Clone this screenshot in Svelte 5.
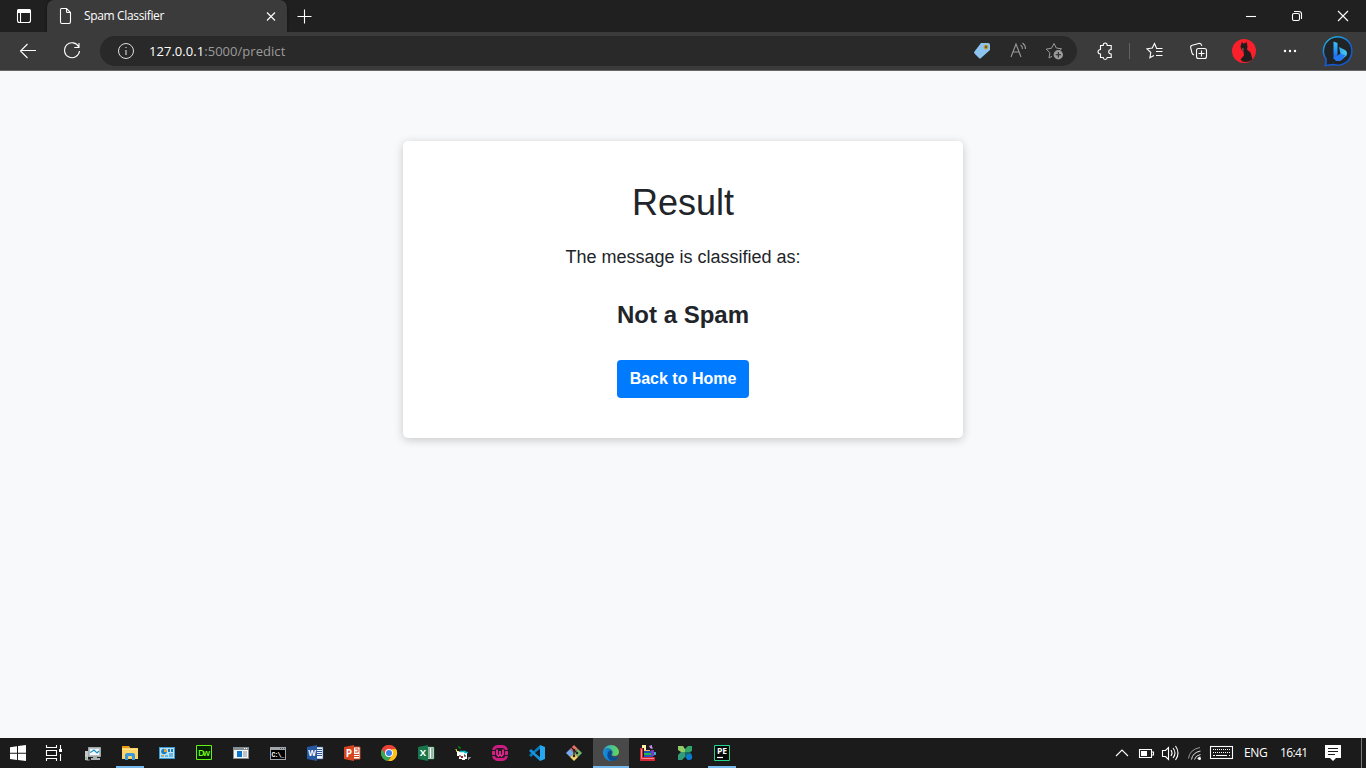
<script>
  // Taskbar shortcuts; every glyph is drawn in an 18 by 18 box.
  const apps = [
    { art: `<path d="M4.5 3.5h12v9h-12z" fill="#b8c0c5" stroke="#a2a9ad"/><path d="M6 5h9v6H6z" fill="#f5fbfd"/><path d="M6 8.5l2-1 2-1.500 3 3 2-2" fill="none" stroke="#1b91cf" stroke-width="1.2"/><path d="M9 13h4v1h3v2H7v-2h2z" fill="#a9b0b3"/><path d="M1 7h3v9H1z" fill="#c4c7c8"/><path d="M1 14h2" stroke="#5dad58"/><path d="M2 16h4" stroke="#969da0"/>` },
    { open: true, art: `<path d="M1 2h7l1 2h8v11H1z" fill="#ffd568"/><path d="M1 2h7v2H1z" fill="#e79a14"/><path d="M1 5h16v1H1z" fill="#ffe18c"/><path d="M4 16v-5q0-2 2-2h6q2 0 2 2v5h-3v-3q0-1-1-1H8q-1 0-1 1v3z" fill="#3a99db"/>` },
    { art: `<path d="M1 3h16v12H1z" fill="#3b9bd3"/><path d="M2 4h14v10H2z" fill="#b9e3f6"/><circle cx="6" cy="7.500" r="2.8" fill="#1680c1"/><path d="M6 5v3h3A3 3 0 006 5z" fill="#ef9d2b"/><path d="M10 5h2v3h-2zm3 0h2v3h-2z" fill="#177dbb"/><path d="M3 12h3M7 12h3M11 10h4M11 12h4" stroke="#178bce"/><path d="M4 11.500h2" stroke="#ef9d2b"/>` },
    { art: `<path d="M1.500 1.500h15v14h-15z" fill="#062207" stroke="#63f216"/><text x="9" y="12.200" text-anchor="middle" font-size="9" font-weight="600" textLength="12" fill="#76ff18">Dw</text>` },
    { art: `<path d="M1 3h16v12H1z" fill="#848e95"/><path d="M2 6h14v8H2z" fill="#f5f5f5"/><path d="M5 7h5v6H5z" fill="#0876ce"/><path d="M11 8h4M11 10h4M11 12h4" stroke="#8a9295"/><path d="M12 4.500h1M14 4.500h1" stroke="#fff"/>` },
    { art: `<path d="M1 3h16v13H1z" fill="#a0a8ac"/><path d="M2 6h14v9H2z" fill="#000"/><path d="M11 4.500h1M13 4.500h1M15 4.500h1" stroke="#4b5357"/><text x="2.500" y="12.500" class="mono" font-size="6.500" font-weight="700" textLength="13" fill="#fff">C:\\_</text>` },
    { art: `<path d="M9 3h8v12H9z" fill="#f2f6ff" stroke="#2b579a" stroke-width=".6"/><path d="M11 5.500h5M11 7.500h5M11 9.500h5M11 11.500h5" stroke="#2b579a"/><path d="M1 3l10-2v16L1 15z" fill="#2858a0"/><text x="6" y="12" text-anchor="middle" font-size="8" font-weight="700" fill="#fff">W</text>` },
    { art: `<path d="M9 3h8v12H9z" fill="#fff" stroke="#d34826"/><path d="M12 5h3v3h-3M11 10.500h5M11 12.500h5" stroke="#d34826" fill="none"/><path d="M1 3l10-2v16L1 15z" fill="#d44420"/><text x="6" y="12.500" text-anchor="middle" font-size="10" font-weight="700" fill="#fff">P</text>` },
    { art: `<circle cx="9" cy="9" r="8" fill="#e94335"/><path d="M2.100 5A8 8 0 008 17l4-6.500L9 9 5.600 11z" fill="#34a853"/><path d="M16 5A8 8 0 018.200 17L12.500 11 12 5z" fill="#fbc116"/><path d="M9 5h7A8 8 0 002.100 5l3.500 5z" fill="#e94335"/><circle cx="9" cy="9" r="4" fill="#fff"/><circle cx="9" cy="9" r="3" fill="#397ee9"/>` },
    { art: `<path d="M9 3h8v12H9z" fill="#f8fff9" stroke="#217346" stroke-width=".7"/><path d="M11 5h2M14 5h2M11 7h2M14 7h2M11 9h2M14 9h2M11 11h2M14 11h2M11 13h2M14 13h2" stroke="#217346"/><path d="M1 3l10-2v16L1 15z" fill="#18764a"/><text x="6" y="12.400" text-anchor="middle" font-size="9.500" font-weight="700" fill="#fff">X</text>` },
    { art: `<path d="M4 2h2v1h1v2H5V4H4z" fill="#086413"/><path d="M1.500 5.500h1v2h2v1" fill="none" stroke="#d7df46"/><path d="M3 7l4 1h6v7h-2v1H8v-1H5v-3H3z" fill="#fff"/><path d="M6 7.500h5v1h3" fill="none" stroke="#05b7cb" stroke-width="1.5"/><path d="M5 12h2M10 11h1v2" fill="none" stroke="#111"/><path d="M7 12h2v2H7z" fill="#c41425"/><path d="M14 13h3v1h-1v1h-1v1h-1z" fill="#888"/>` },
    { art: `<rect x="2.500" y="2.500" width="13" height="13" rx="4" fill="#291824" stroke="#cf1c83" stroke-width="2.800"/><path d="M1 6.500h3M14 6.500h3M1 11.500h3M14 11.500h3" stroke="#1b1b1b"/><path d="M1 9h3M14 9h3" stroke="#d61f85" stroke-width="3"/><path d="M6 5.500v5l1.500 1.500L9 10.500l1.500 1.500 1.500-1.500v-5M9 7v4" fill="none" stroke="#ed2c96" stroke-width="1.700"/>` },
    { art: `<path d="M12 1l5 2v12l-5 2z" fill="#26a7f2"/><path d="M12 1v4L3 13 1 11z" fill="#0878bd"/><path d="M1 7l2-2 9 8v4z" fill="#1593dc"/><path d="M12 5v8L7 9z" fill="#181c1e"/>` },
    { art: `<path d="M9 1l4 4-4 4-4-4z" fill="#e9736a"/><path d="M13 5l4 4-4 4-4-4z" fill="#73b96b"/><path d="M5 5l4 4-4 4-4-4z" fill="#77a9ed"/><path d="M9 9l4 4-4 4-4-4z" fill="#f1d36f"/><path d="M6 3l3 3v6M9 6l3 3" fill="none" stroke="#292323" stroke-width="1.200"/><circle cx="9" cy="6" r="1.300" fill="#292323"/><circle cx="9" cy="12" r="1.300" fill="#292323"/><circle cx="12" cy="9" r="1.300" fill="#292323"/>` },
    { open: true, active: true, art: `<path d="M1 8C1 12 4 17 9 17c3 0 6-1.500 7.300-4-3.300 1.500-7.300.5-7.300-2.500 0-1.200.8-1.500.8-2.500C9.800 6 7.500 4.500 5.200 4.500 3 4.500 1.500 6 1 8z" fill="url(#edge-blue)"/><path d="M1 8C1.500 4 5 1 9 1c4.500 0 8 3.500 8 7 0 2.500-2 4-4.200 4-2 0-3.500-.7-2.800-1.700 2-2.500-1-6-4.500-6C3.200 4.300 1.500 6 1 8z" fill="url(#edge-green)"/><path d="M6.500 7.500C4 11 6 16.500 10.500 16.700c2.500 0 4.500-1.500 5.800-3.700C13 14.500 9 13.500 9 10.500c0-1.200.8-1.500.8-2.500-.5-1.300-2.300-1.500-3.300-.5z" fill="#084b91"/>` },
    { art: `<path d="M1 4h3v9h12v4H1z" fill="#d52536"/><path d="M2.500 5v9.500H15" fill="none" stroke="#ff8789"/><path d="M3 1h4v5H5V4H3z" fill="#fff0b0"/><path d="M5 6h6v2H5z" fill="#eeb866"/><path d="M5 7h7v2H5z" fill="#1755bd"/><path d="M5 9h7v2H5z" fill="#1fbb45"/><path d="M5 11h9v2H5z" fill="#2853c3"/><path d="M12 6h3v6h-3z" fill="#7f38b8"/><path d="M10 2l3-1v2l1 1-1 1-2-1z" fill="#cc8be8"/><path d="M15 8h2v3h-2z" fill="#31a8d5"/>` },
    { art: `<path d="M2 2h5l2 3v3H5L2 6z" fill="#91cb65"/><path d="M9 8V5l3-3h4v5l-2 1z" fill="#32a568"/><path d="M2 16v-5l3-3h4v5l-3 3z" fill="#329b77"/><path d="M9 8h5l2 3-4 5-3-3z" fill="#176b66"/><circle cx="13.200" cy="13" r="3" fill="#087cd5"/>` },
    { open: true, art: `<path d="M1.500 1.500h15v15h-15z" fill="#050806" stroke="#22d78d"/><text x="9" y="9.700" text-anchor="middle" font-size="8.500" font-weight="700" fill="#fff">PE</text><path d="M4 13.500h6" stroke="#fff" stroke-width="1.200"/>` }
  ];
</script>

<div class="screen">
  <header class="titlebar">
    <div class="workspace"><svg width="16" height="16" viewBox="0 0 16 16"><rect x="1.500" y="1.500" width="13" height="13" rx="2" class="line"/><path d="M1 3q0-2 2-2h10q2 0 2 2v2H1z" fill="#fff"/><path d="M4.500 5v9" class="line"/></svg></div>
    <div class="tab">
      <svg class="page-icon" width="14" height="18" viewBox="0 0 14 18"><path d="M2.500 1.500h5l4 4v9q0 2-1.500 2H3q-1.500 0-1.500-1.500V3q0-1.500 1-1.500zM7.500 1.500v3q0 1 1 1h3" class="line"/></svg>
      <span>Spam Classifier</span>
      <svg class="close-tab" width="10" height="10" viewBox="0 0 10 10"><path d="M1 1.500l8 8M9 1.500l-8 8" class="line"/></svg>
    </div>
    <svg class="new-tab" width="15" height="15" viewBox="0 0 15 15"><path d="M7.500.5v14M.5 7.500h14" class="line"/></svg>
    <div class="window-buttons">
      <svg width="46" height="32"><path d="M18 16.500h10" class="line"/></svg>
      <svg width="46" height="32"><rect x="18.500" y="13.500" width="7" height="7" rx="1.500" class="line"/><path d="M20 11.500h5q2.500 0 2.500 2.500v5" class="line"/></svg>
      <svg width="46" height="32"><path d="M18 11l10 10M28 11L18 21" class="line"/></svg>
    </div>
  </header>

  <nav class="toolbar">
    <svg class="back" width="18" height="18" viewBox="0 0 18 18"><path d="M8.500 2L1.500 9l7 7M1.500 8.500H17" class="line"/></svg>
    <svg class="refresh" width="18" height="18" viewBox="0 0 18 18"><path d="M15.800 5A7.500 7.500 0 1016.500 9M16 1v4.500h-4.700" class="line"/></svg>
    <div class="address">
      <svg width="18" height="18" viewBox="0 0 18 18"><circle cx="9" cy="9" r="7.500" fill="none" stroke="#ddd"/><path d="M9 8v5M9 5v1" stroke="#ccc" stroke-width="1.200"/></svg>
      <div class="url"><b>127.0.0.1</b>:5000/predict</div>
      <div class="address-icons">
        <svg width="36" height="24"><path d="M17 4h7q2 0 2 2v5L17 19q-1 1-2 0l-4.500-4.500q-1-1 0-2z" fill="#8cc3ef"/><circle cx="22" cy="8" r="2" fill="#625e4d" stroke="#d4aa20"/></svg>
        <svg width="36" height="24"><path d="M11 18l5-13 5 13M13 13h6M20.500 6q2 1 2 4M22.500 4q3 2 3 6" fill="none" stroke="#9b9b9b" stroke-width="1.100"/></svg>
        <svg width="36" height="24"><path d="M18 4.500l2.300 4.500 5.200.8-3.600 3.500M13 19l.9-5.200-3.700-3.700 5.200-.8L18 4.500M13 19l3-1.700" fill="none" stroke="#9b9b9b"/><circle cx="22.300" cy="15.700" r="4.700" fill="#9b9b9b"/><path d="M22.300 13v5.400M19.600 15.700H25" stroke="#292929" stroke-width="1.100"/></svg>
      </div>
    </div>
    <div class="actions">
      <svg width="46" height="39"><path d="M17.500 13.500h2.700q0-2.500 2-2.500t2 2.500h4v4q-2.500.2-2.500 2.200t2.500 2.300v3.500h-4q-.2 2-2 2t-2-2h-2.700V22q-2.500-.2-2.500-2.200t2.500-2.300z" class="line"/></svg>
      <i class="separator"></i>
      <svg width="44" height="39"><path d="M24.500 16l-2-4.500-2.200 4.500-5.300.8 3.800 3.700-.9 5.200 4-2.200M24 16.500h6.500M24 19.500h6.500M24 23.500h6.500" class="line"/></svg>
      <svg width="46" height="39"><rect x="20.500" y="16.500" width="10" height="10" rx="2" class="line"/><path d="M25.500 18.500v6M22.500 21.500h6M18 23q-1.500-.4-2-2l-1.300-5.300q-.4-2 1.500-2.500l6.500-1.700q2-.5 2.800 1.400l.3 1" class="line"/></svg>
      <svg width="46" height="39"><circle cx="22" cy="19" r="12" fill="#f9202b"/><path d="M20 9.500l1 2 2.500-.5 1-1.500 1 5-.5 3 3.500 3 2 7q-4 3.500-10 2l-2-2 3.500-4-.5-4-2-2-1-3z" fill="#211c1e"/><path d="M20 16l2 .5-.5 2.500-1.500-1z" fill="#765048"/></svg>
      <svg width="46" height="39"><circle cx="17" cy="19" r="1.200" fill="#fff"/><circle cx="22" cy="19" r="1.200" fill="#fff"/><circle cx="27" cy="19" r="1.200" fill="#fff"/></svg>
      <svg width="46" height="39" class="bing" viewBox="-1.5 0 46 39"><path d="M9.700 33.500q1.200-3 .8-6.500A14.200 14.200 0 1118 32.500q-4 .3-8.300 1z" fill="#202426" stroke="url(#bing-outline)" stroke-width="1.500"/><path d="M18 9.500l4 1.500v12l-4 4z" fill="url(#bing-stem)"/><path d="M23.500 15l6 3q3 2 1.500 5.500l-5 4.500q-3.500 2-6 .2L18 26l7-4z" fill="url(#bing-ring)"/><path d="M18 26l7-4 5 1-4 5q-3.500 2-6 .2z" fill="#2378f3"/></svg>
    </div>
  </nav>

  <main>
    <section>
      <h1>Result</h1>
      <p>The message is classified as:</p>
      <h2>Not a Spam</h2>
      <button>Back to Home</button>
    </section>
  </main>

  <footer>
    <svg class="start" width="36" height="30"><path d="M10 9.200l7-1v6.500h-7zm8-1.100l8-1.100v7.700h-8zM10 15.700h7v6.400l-7-1zm8 0h8V23l-8-1.100z" fill="#fff"/></svg>
    <svg class="tasks" width="39" height="30"><path d="M10.500 7v2.500h10V7M10.500 23v-2.500h10V23M10.500 12.500h10v5h-10zM24.500 7v4M24.500 16v7" class="line"/><path d="M23 11h3v3h-3z" fill="#fff"/></svg>
    <div class="apps">
      {#each apps as app}
        <div class="app" class:open={app.open} class:active={app.active}>
          <svg width="18" height="18" viewBox="0 0 18 18">{@html app.art}</svg>
        </div>
      {/each}
    </div>
    <div class="tray">
      <svg width="26" height="30"><path d="M7 18l6-6 6 6" class="line"/></svg>
      <svg width="23" height="30"><path d="M4.500 11.500h12v8h-12zM17 14h1.500v3H17" class="line"/><path d="M6 13h6v5H6z" fill="#fff"/></svg>
      <svg width="25" height="30"><path d="M4.500 12.500h3l3-3v12l-3-3h-3zM13 12q2 3 0 6M15 10q4 5 0 10M17.500 8q5 7 0 14" class="line"/></svg>
      <svg width="23" height="30"><path d="M8.500 21.500q1-7 9-8.500M11.500 21.500q1-4 6-5M14.500 21q1-2 3-2" fill="none" stroke="#ddd"/><path d="M5.500 20.500q1-9 11.500-11" fill="none" stroke="#999"/><circle cx="16.500" cy="20.500" r="1.500" fill="#fff"/></svg>
      <svg width="30" height="30"><rect x="4.500" y="8.500" width="22" height="12" class="line"/><path d="M7 11.500h17M7 14.500h17" stroke="#fff" stroke-dasharray="1 1"/><path d="M7 17.500h2M10 17.500h11M23 17.500h1" class="line"/></svg>
      <span class="lang">ENG</span><span class="clock">16:41</span>
      <svg class="notice" width="18" height="30"><path d="M1 7h16v13h-5l-3 3-3-3H1z" fill="#fff"/><path d="M4 10.500h10M4 13.500h10M4 16.500h7" stroke="#1b1b1b"/></svg>
      <i class="desktop"></i>
    </div>
  </footer>
  <svg class="defs" width="0" height="0"><defs><linearGradient id="edge-blue"><stop stop-color="#1592e0"/><stop offset="1" stop-color="#0b5ba8"/></linearGradient><linearGradient id="edge-green"><stop stop-color="#28a9ea"/><stop offset="1" stop-color="#66d852"/></linearGradient><linearGradient id="bing-outline" x2=".6" y2="1"><stop stop-color="#20c4e8"/><stop offset=".6" stop-color="#1463d9"/><stop offset="1" stop-color="#1558c9"/></linearGradient><linearGradient id="bing-ring"><stop stop-color="#2485f2"/><stop offset="1" stop-color="#45d0f0"/></linearGradient><linearGradient id="bing-stem" x2="0" y2="1"><stop stop-color="#3bc5fa"/><stop offset="1" stop-color="#1764f4"/></linearGradient></defs></svg>
</div>

<style>
  :global(body) { margin: 0; overflow: hidden; }
  * { box-sizing: border-box; }
  .screen { width: 1366px; height: 768px; display: flex; flex-direction: column; background: #f8f9fa; font-family: "Open Sans", sans-serif; }
  svg { display: block; flex-shrink: 0; }
  .line { fill: none; stroke: #fff; stroke-width: 1.1; }
  .titlebar { height: 32px; display: flex; align-items: center; background: #202020; flex-shrink: 0; }
  .workspace { width: 47px; padding-left: 16px; }
  .tab { width: 240px; height: 32px; display: flex; align-items: center; background: #3b3b3b; border-radius: 7px 7px 0 0; padding: 0 11px 0 12px; font-size: 12px; color: #fff; box-shadow: 0 0 3px #111; }
  .tab span { margin-left: 11px; letter-spacing: -.35px; white-space: nowrap; line-height: 16px; padding-bottom: 1px; }
  .close-tab { margin-left: auto; }
  .new-tab { margin-left: 10px; }
  .window-buttons { display: flex; margin-left: auto; }
  .toolbar { height: 39px; display: flex; align-items: center; background: #3b3b3b; border-bottom: 1px solid #67676a; padding-left: 19px; flex-shrink: 0; }
  .refresh { margin-left: 26px; }
  .address { width: 977px; height: 30px; margin-left: 19px; border-radius: 15px; background: #292929; padding-left: 17px; display: flex; align-items: center; }
  .url { margin-left: 14px; font-size: 13px; letter-spacing: .04px; color: #9b9b9b; white-space: nowrap; }
  .url b { color: #fff; font-weight: 400; }
  .address-icons { display: flex; margin-left: auto; padding-right: 5px; }
  .actions { display: flex; align-items: center; margin-left: 6px; }
  .separator { width: 1px; height: 16px; background: #626262; margin-right: 2px; }
  main { height: 667px; padding-top: 70px; display: flex; justify-content: center; align-items: flex-start; font-family: "Liberation Sans", Arial, sans-serif; color: #212529; }
  section { width: 560px; height: 297px; border-radius: 5px; padding: 40px; text-align: center; background: #fff; box-shadow: 0 2px 10px rgba(0,0,0,.2); }
  h1 { font-size: 36px; font-weight: 400; line-height: 1.2; margin: 0 0 20px; }
  p { font-size: 18px; line-height: 27px; margin: 0 0 30px; }
  h2 { font-size: 24px; line-height: 28.8px; margin: 0 0 30px; }
  button { display: block; margin: 0 auto; width: 132px; height: 38px; padding: 0; border: 0; border-radius: 4px; background: #007bff; color: #fff; font: 700 16px "Liberation Sans", Arial, sans-serif; }
  footer { height: 30px; background: #1b1b1b; display: flex; flex-shrink: 0; color: #fff; }
  .apps { display: flex; gap: 1px; }
  .app { width: 36px; height: 30px; padding: 6px 9px; position: relative; }
  .active { background: #494949; }
  .open::after { content: ""; position: absolute; bottom: 0; left: 4px; width: 28px; height: 2px; background: #76b9ed; }
  .active::after { left: 0; width: 36px; }
  .app :global(.mono) { font-family: "Liberation Mono", monospace; }
  .tray { width: 257px; margin-left: auto; display: flex; align-items: center; font-size: 12px; }
  .lang { width: 36px; padding-left: 8px; letter-spacing: -.35px; }
  .clock { width: 43px; padding-left: 8px; letter-spacing: -.65px; }
  .lang, .clock { padding-bottom: 1px; }
  .notice { margin-left: 9px; }
  .desktop { width: 1px; height: 30px; background: #777; margin-left: 19px; }
  .defs { position: absolute; }
</style>
